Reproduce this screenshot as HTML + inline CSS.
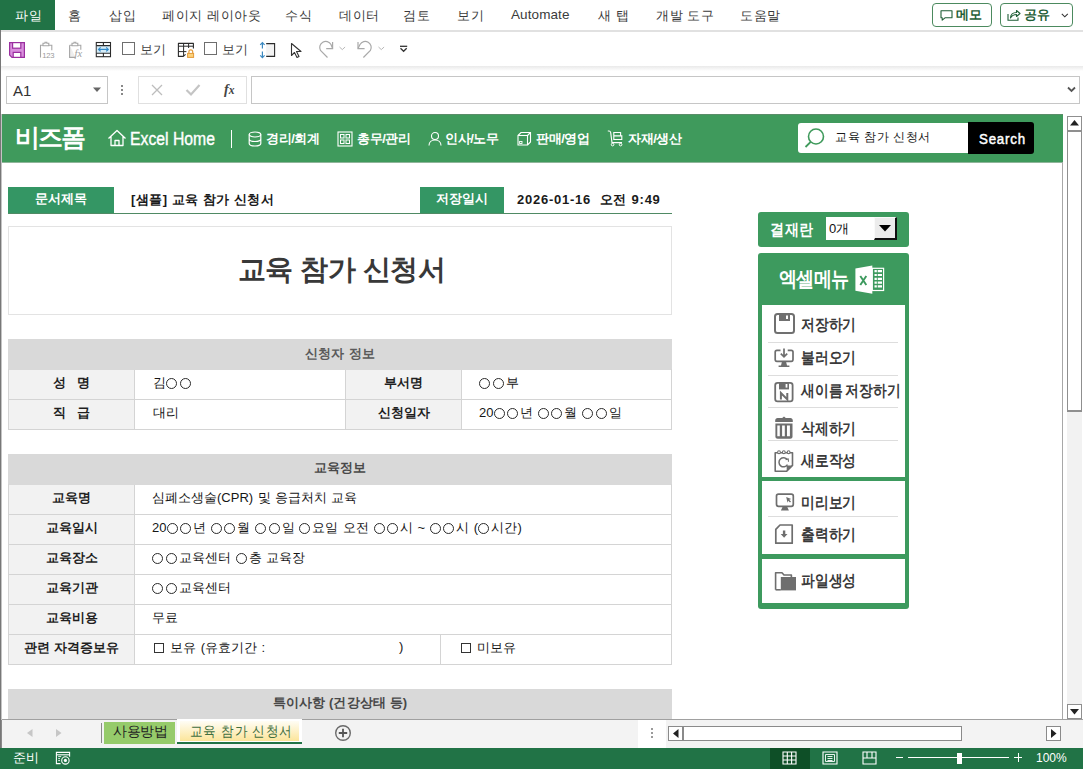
<!DOCTYPE html>
<html><head><meta charset="utf-8">
<style>
*{box-sizing:border-box;margin:0;padding:0}
html,body{width:1083px;height:769px;overflow:hidden;background:#fff;font-family:"Liberation Sans",sans-serif;color:#262626}
.a{position:absolute}
.menu span{position:absolute;top:7px;font-size:13px;color:#3b3b3b;letter-spacing:0.6px;white-space:nowrap}
.t{position:absolute;white-space:nowrap}
.cell{position:absolute;border:1px solid #d4d4d4}
.hdr{position:absolute;background:#d9d9d9;font-size:13px;font-weight:bold;color:#404040;text-align:center}
.lbl{position:absolute;background:#f2f2f2;font-size:13px;font-weight:bold;color:#262626;text-align:center}
.val{position:absolute;font-size:13px;color:#262626}
.gl{position:absolute;background:#d4d4d4}
.tl{position:absolute;text-align:center;font-size:13px;font-weight:bold;color:#1f1f1f;white-space:nowrap}
.tv{position:absolute;font-size:13px;color:#161616;white-space:nowrap;word-spacing:0.8px}
.o{display:inline-block;width:11px;height:11px;border:1px solid #2a2a2a;border-radius:50%;vertical-align:-2px;margin:0 2px 0 0.4px}
.cb{display:inline-block;width:10px;height:10px;border:1px solid #333;vertical-align:-1px;margin:0 2.5px 0 1.5px}
.mi{position:absolute;left:801px;top:0;font-size:16px;font-weight:bold;color:#3a3a3a;letter-spacing:0px;white-space:nowrap;transform:scaleX(0.86);transform-origin:0 0}
.sep{position:absolute;left:768px;width:130px;height:1px;background:#ddd}
</style></head><body>
<!-- window left border -->


<!-- MENU BAR -->
<div class="a menu" style="left:0;top:0;width:1083px;height:30px;background:#fff">
  <div class="a" style="left:0;top:0;width:55px;height:30px;background:#217346"></div>
  <span style="left:15px;color:#fff">파일</span>
  <span style="left:68px">홈</span>
  <span style="left:109px">삽입</span>
  <span style="left:162px">페이지 레이아웃</span>
  <span style="left:285px">수식</span>
  <span style="left:339px">데이터</span>
  <span style="left:403px">검토</span>
  <span style="left:457px">보기</span>
  <span style="left:511px;letter-spacing:0.1px;font-size:13.5px">Automate</span>
  <span style="left:598px">새 탭</span>
  <span style="left:656px">개발 도구</span>
  <span style="left:740px">도움말</span>
</div>
<div class="a" style="left:932px;top:3px;width:60px;height:24px;border:1px solid #4c8a5f;border-radius:4px"></div>
<svg class="a" style="left:940px;top:10px" width="13" height="11" viewBox="0 0 13 11"><path d="M1 0.8h11v7H5L2.2 10.2V7.8H1z" fill="none" stroke="#1e5e36" stroke-width="1.1" stroke-linejoin="round"/></svg>
<div class="t" style="left:956px;top:7px;font-size:12.5px;font-weight:bold;color:#1e5e36">메모</div>
<div class="a" style="left:1000px;top:3px;width:73px;height:24px;border:1px solid #4c8a5f;border-radius:4px"></div>
<svg class="a" style="left:1007px;top:9px" width="14" height="12" viewBox="0 0 14 12"><path d="M1 5v6.2h10V8.5" fill="none" stroke="#1e5e36" stroke-width="1.1"/><path d="M3.5 9c0-3.5 2.5-5.5 6-5.5V1.5l3.5 3-3.5 3V5.5c-2.5 0-4.5 1-6 3.5z" fill="none" stroke="#1e5e36" stroke-width="1.1" stroke-linejoin="round"/></svg>
<div class="t" style="left:1024px;top:7px;font-size:12.5px;font-weight:bold;color:#1e5e36">공유</div>
<svg class="a" style="left:1061px;top:13px" width="8" height="5"><path d="M0.8 0.8l3 3 3-3" fill="none" stroke="#333" stroke-width="1.1"/></svg>
<div class="a" style="left:0;top:30px;width:1083px;height:2px;background:#e1e1e1"></div>

<!-- TOOLBAR -->
<div class="a" style="left:2px;top:32px;width:1081px;height:35px;background:#fff"></div>
<div class="a" style="left:0;top:66px;width:1083px;height:5px;background:linear-gradient(#e9e9e9,#f6f6f6 60%,#fff)"></div>


<!-- toolbar icons -->
<svg class="a" style="left:0px;top:34px" width="120" height="30" viewBox="0 34 120 30">
 <path d="M9.6 42.6H24.4V57.4H12L9.6 55z" fill="#d98fdd" stroke="#9a2f9f" stroke-width="1.2"/>
 <rect x="12.6" y="42.6" width="8.2" height="5.6" fill="#fff" stroke="#9a2f9f" stroke-width="1.2"/>
 <rect x="13.2" y="52.4" width="7.6" height="5" fill="#fff" stroke="#9a2f9f" stroke-width="1.2"/>
 <path d="M40.5 57.5V45.3h2.5M48.8 45.3h3v5" fill="none" stroke="#a6a6a6" stroke-width="1.1"/>
 <path d="M43 45.8v-2.5h2v-1h1.8v1h2v2.5z" fill="none" stroke="#a6a6a6" stroke-width="1.1"/>
 <text x="42.3" y="57.6" font-size="7.6" fill="#9a9a9a" font-family="Liberation Sans" letter-spacing="-0.2">123</text>
 <path d="M69.6 45.3h2.5v0M77.8 45.3h3v4.5" fill="none" stroke="#a6a6a6" stroke-width="1.1"/>
 <path d="M69.6 45.3V57.4h6" fill="#eeeeee" stroke="#a6a6a6" stroke-width="1.1"/>
 <path d="M72 45.8v-2.5h2v-1h1.8v1h2v2.5z" fill="none" stroke="#a6a6a6" stroke-width="1.1"/>
 <text x="74.5" y="57.2" font-size="10.5" font-style="italic" fill="#a0a0a0" font-family="Liberation Serif">fx</text>
 <rect x="96.3" y="42.5" width="14.2" height="14.2" fill="#fff" stroke="#2b2b2b" stroke-width="1.1"/>
 <rect x="96.8" y="45.6" width="13.2" height="7.6" fill="#d5ecf8"/>
 <path d="M96.3 45.6h14.2M96.3 53.2h14.2M103.4 42.5v3.1M103.4 53.2v3.5" stroke="#2b2b2b" stroke-width="1.1"/>
 <path d="M98.6 49.4h9.6" stroke="#2f88c8" stroke-width="1.2"/>
 <path d="M100.6 47.4l-2 2 2 2M106.2 47.4l2 2-2 2" fill="none" stroke="#2f88c8" stroke-width="1.2"/>
</svg>
<div class="a" style="left:122px;top:42px;width:13px;height:13px;border:1px solid #6e6e6e;background:#fff"></div>
<div class="t" style="left:140px;top:41.5px;font-size:12.5px;color:#444;letter-spacing:0.1px">보기</div>
<svg class="a" style="left:172px;top:36px" width="30" height="26" viewBox="172 36 30 26">
 <path d="M193.4 48.6V43.4H178.4V56.4H183.2L185.6 54.4" fill="none" stroke="#2b2b2b" stroke-width="1.1" stroke-linejoin="round"/>
 <path d="M178.4 46.2H193.4M178.4 51.6H186.4M183.6 43.4V56.4M188.6 43.4V48" fill="none" stroke="#2b2b2b" stroke-width="1"/>
 <path d="M188.9 53.4v-1.6a1.9 1.9 0 0 1 3.8 0v1.6" fill="none" stroke="#e39a3a" stroke-width="1.2"/>
 <rect x="187.6" y="53.4" width="6" height="4" fill="#fcd27a" stroke="#e39a3a" stroke-width="1"/>
</svg>
<div class="a" style="left:204px;top:42px;width:13px;height:13px;border:1px solid #6e6e6e;background:#fff"></div>
<div class="t" style="left:222px;top:41.5px;font-size:12.5px;color:#444;letter-spacing:0.1px">보기</div>
<svg class="a" style="left:255px;top:38px" width="24" height="24" viewBox="255 38 24 24">
 <rect x="266.2" y="43.6" width="8.4" height="12.8" fill="#f3f3f3"/>
 <path d="M266.2 43.6h8.4v12.8h-8.4" fill="none" stroke="#2b2b2b" stroke-width="1.1"/>
 <path d="M262.4 42.6v6M262.4 51.4v6.2M260.2 44.8l2.2-2.2 2.2 2.2M260.2 55.4l2.2 2.2 2.2-2.2" fill="none" stroke="#3a88c0" stroke-width="1.2"/>
</svg>
<svg class="a" style="left:290px;top:42px" width="13" height="17" viewBox="0 0 13 17">
 <path d="M1.5 1.5v12l3-3 2.5 5 2-1-2.5-5h4.5z" fill="#fff" stroke="#333" stroke-width="1.1" stroke-linejoin="round"/>
</svg>
<svg class="a" style="left:310px;top:34px" width="100" height="30" viewBox="310 34 100 30">
 <path d="M327.5 57.5 L320.5 50.5 A6 6 0 1 1 331 44.5 L332.6 48.6" fill="none" stroke="#a9a9a9" stroke-width="1.2" stroke-linejoin="miter"/>
 <path d="M332.6 42v6.6h-6.4" fill="none" stroke="#a9a9a9" stroke-width="1.2"/>
 <path d="M339.5 47l2.8 2.6 2.8-2.6" fill="none" stroke="#b8b8b8" stroke-width="1"/>
 <path d="M363.4 57.5 L370.4 50.5 A6 6 0 1 0 360 44.5 L358 48.6" fill="none" stroke="#a9a9a9" stroke-width="1.2"/>
 <path d="M358 42v6.6h6.6" fill="none" stroke="#a9a9a9" stroke-width="1.2"/>
 <path d="M378.5 47l2.8 2.6 2.8-2.6" fill="none" stroke="#b8b8b8" stroke-width="1"/>
 <path d="M400 46.3h7.2" stroke="#333" stroke-width="1.3"/>
 <path d="M400.5 48.3l3.1 3 3.1-3" fill="none" stroke="#333" stroke-width="1.3"/>
</svg>
<!-- FORMULA BAR -->
<div class="a" style="left:2px;top:71px;width:1081px;height:42px;background:#fff"></div>
<div class="a" style="left:6px;top:76px;width:102px;height:28px;border:1px solid #c6c6c6;background:#fff"></div>
<div class="t" style="left:13px;top:82px;font-size:15px;color:#333">A1</div>
<div class="a" style="left:138px;top:76px;width:109px;height:28px;border:1px solid #e0e0e0;background:#fff"></div>
<div class="a" style="left:251px;top:76px;width:829px;height:28px;border:1px solid #c6c6c6;background:#fff"></div>


<svg class="a" style="left:93px;top:87px" width="9" height="6"><path d="M0 0.5h8l-4 4.5z" fill="#666"/></svg>
<div class="a" style="left:121px;top:85px;width:2px;height:2px;background:#888;box-shadow:0 4px 0 #888,0 8px 0 #888"></div>
<svg class="a" style="left:150px;top:83px" width="14" height="14"><path d="M2 2l10 10M12 2L2 12" stroke="#bdbdbd" stroke-width="1.3"/></svg>
<svg class="a" style="left:185px;top:83px" width="16" height="14"><path d="M1.5 7l4.5 4.5 8.5-9.5" fill="none" stroke="#c4c4c4" stroke-width="2.2"/></svg>
<div class="t" style="left:224px;top:82px;font-size:14px;font-style:italic;font-weight:bold;font-family:'Liberation Serif',serif;color:#444;letter-spacing:0px">f<span style="font-size:11.5px">x</span></div>
<svg class="a" style="left:1067px;top:86px" width="9" height="7"><path d="M1 1.5l3.5 3.5 3.5-3.5" fill="none" stroke="#555" stroke-width="1.8"/></svg>

<!-- SHEET AREA -->
<div class="a" style="left:2px;top:113px;width:1062px;height:607px;background:#fff"></div>
<div class="a" style="left:2px;top:114px;width:1061px;height:48px;background:#3f9a5c"></div><div class="a" style="left:2px;top:162px;width:1061px;height:1px;background:#8fb59a"></div>



<!-- DOCUMENT -->
<div class="a" style="left:8px;top:187px;width:106px;height:27px;background:#349664"></div>
<div class="t" style="left:8px;top:190px;width:106px;text-align:center;font-size:13px;font-weight:bold;color:#fff">문서제목</div>
<div class="t" style="left:131px;top:191px;font-size:13px;font-weight:bold;color:#1a1a1a;letter-spacing:0.5px">[샘플] 교육 참가 신청서</div>
<div class="a" style="left:420px;top:187px;width:84px;height:27px;background:#349664"></div>
<div class="t" style="left:420px;top:190px;width:84px;text-align:center;font-size:13px;font-weight:bold;color:#fff">저장일시</div>
<div class="t" style="left:517px;top:191px;font-size:13px;font-weight:bold;color:#1a1a1a;letter-spacing:0.75px">2026-01-16&nbsp;&nbsp;오전 9:49</div>
<div class="a" style="left:8px;top:213px;width:664px;height:1px;background:#4f8a64"></div>

<div class="a" style="left:8px;top:226px;width:664px;height:89px;border:1px solid #e3e3e3"></div>
<div class="t" style="left:8px;top:251px;width:667px;text-align:center;font-size:28px;font-weight:bold;color:#383838;letter-spacing:-0.5px">교육 참가 신청서</div>

<!-- 신청자 정보 -->
<div class="a" style="left:8px;top:339px;width:664px;height:31px;background:#d9d9d9"></div>
<div class="t" style="left:8px;top:345px;width:664px;text-align:center;font-size:13px;font-weight:bold;color:#5a5a5a;letter-spacing:0.2px">신청자 정보</div>
<div class="a" style="left:8px;top:370px;width:127px;height:60px;background:#f2f2f2"></div>
<div class="a" style="left:345px;top:370px;width:117px;height:60px;background:#f2f2f2"></div>
<div class="a grid" style="left:8px;top:369px;width:664px;height:61px;border:1px solid #d4d4d4;border-top:none"></div>
<div class="gl" style="left:8px;top:399px;width:664px;height:1px"></div>
<div class="gl" style="left:134px;top:370px;width:1px;height:60px"></div>
<div class="gl" style="left:345px;top:370px;width:1px;height:60px"></div>
<div class="gl" style="left:461px;top:370px;width:1px;height:60px"></div>
<div class="tl" style="left:8px;top:374px;width:127px">성&nbsp;&nbsp;&nbsp;명</div>
<div class="tv" style="left:153px;top:374px">김<span class="o"></span><span class="o"></span></div>
<div class="tl" style="left:345px;top:374px;width:117px">부서명</div>
<div class="tv" style="left:479px;top:374px"><span class="o"></span><span class="o"></span>부</div>
<div class="tl" style="left:8px;top:404px;width:127px">직&nbsp;&nbsp;&nbsp;급</div>
<div class="tv" style="left:153px;top:404px">대리</div>
<div class="tl" style="left:345px;top:404px;width:117px">신청일자</div>
<div class="tv" style="left:479px;top:404px">20<span class="o"></span><span class="o"></span>년 <span class="o"></span><span class="o"></span>월 <span class="o"></span><span class="o"></span>일</div>

<!-- 교육정보 -->
<div class="a" style="left:8px;top:454px;width:664px;height:31px;background:#d9d9d9"></div>
<div class="t" style="left:8px;top:459px;width:664px;text-align:center;font-size:13px;font-weight:bold;color:#484848">교육정보</div>
<div class="a" style="left:8px;top:485px;width:127px;height:179px;background:#f2f2f2"></div>
<div class="a" style="left:8px;top:484px;width:664px;height:181px;border:1px solid #d4d4d4;border-top:none"></div>
<div class="gl" style="left:8px;top:514px;width:664px;height:1px"></div>
<div class="gl" style="left:8px;top:544px;width:664px;height:1px"></div>
<div class="gl" style="left:8px;top:574px;width:664px;height:1px"></div>
<div class="gl" style="left:8px;top:604px;width:664px;height:1px"></div>
<div class="gl" style="left:8px;top:634px;width:664px;height:1px"></div>
<div class="gl" style="left:134px;top:485px;width:1px;height:180px"></div>
<div class="gl" style="left:440px;top:635px;width:1px;height:30px"></div>
<div class="tl" style="left:8px;top:489px;width:127px">교육명</div>
<div class="tv" style="left:152px;top:489px">심폐소생술(CPR) 및 응급처치 교육</div>
<div class="tl" style="left:8px;top:519px;width:127px">교육일시</div>
<div class="tv" style="left:152px;top:519px">20<span class="o"></span><span class="o"></span>년 <span class="o"></span><span class="o"></span>월 <span class="o"></span><span class="o"></span>일 <span class="o"></span>요일 오전 <span class="o"></span><span class="o"></span>시 ~ <span class="o"></span><span class="o"></span>시 (<span class="o"></span>시간)</div>
<div class="tl" style="left:8px;top:549px;width:127px">교육장소</div>
<div class="tv" style="left:152px;top:549px"><span class="o"></span><span class="o"></span>교육센터 <span class="o"></span>층 교육장</div>
<div class="tl" style="left:8px;top:579px;width:127px">교육기관</div>
<div class="tv" style="left:152px;top:579px"><span class="o"></span><span class="o"></span>교육센터</div>
<div class="tl" style="left:8px;top:609px;width:127px">교육비용</div>
<div class="tv" style="left:152px;top:609px">무료</div>
<div class="tl" style="left:8px;top:639px;width:127px">관련 자격증보유</div>
<div class="tv" style="left:152px;top:639px"><span class="cb"></span> 보유 (유효기간 :</div>
<div class="tv" style="left:399px;top:639px">)</div>
<div class="tv" style="left:459px;top:639px"><span class="cb"></span> 미보유</div>

<!-- 특이사항 -->
<div class="a" style="left:8px;top:689px;width:664px;height:31px;background:#d9d9d9"></div>
<div class="t" style="left:8px;top:694px;width:664px;text-align:center;font-size:13px;font-weight:bold;color:#484848;letter-spacing:0.1px">특이사항 (건강상태 등)</div>


<!-- RIGHT PANEL -->
<div class="a" style="left:758px;top:212px;width:151px;height:35px;background:#3d9a5e;border-radius:3px"></div>
<div class="t" style="left:770px;top:220px;font-size:16px;font-weight:bold;color:#fff;letter-spacing:0.5px;transform:scaleX(0.88);transform-origin:0 0">결재란</div>
<div class="a" style="left:826px;top:217px;width:48px;height:23px;background:#fff"></div>
<div class="t" style="left:829px;top:220px;font-size:13px;color:#111;letter-spacing:-0.5px">0개</div>
<div class="a" style="left:874px;top:217px;width:23px;height:23px;background:#ececec;border-top:1px solid #fafafa;border-left:1px solid #fafafa;border-right:2px solid #111;border-bottom:2px solid #111"></div>
<svg class="a" style="left:879px;top:225px" width="12" height="7"><path d="M0 0h12L6 6.5z" fill="#000"/></svg>

<div class="a" style="left:758px;top:253px;width:151px;height:356px;background:#3d9a5e;border-radius:3px"></div>
<div class="t" style="left:779px;top:265px;font-size:21px;font-weight:bold;color:#fff;letter-spacing:-0.8px;transform:scaleX(0.86);transform-origin:0 0">엑셀메뉴</div>
<svg class="a" style="left:850px;top:260px" width="40" height="40" viewBox="850 260 40 40">
 <path d="M855.4 268.5 L872.3 265.6 V293.7 L855.4 290.8z" fill="#fff"/>
 <path d="M860.3 276 L866.3 285 M866.3 276 L860.3 285" stroke="#3d9a5e" stroke-width="1.9"/>
 <rect x="872.3" y="268.3" width="11.3" height="22.2" fill="none" stroke="#fff" stroke-width="1.2"/>
 <path d="M874.5 271.2h7.5M874.5 275h7.5M874.5 278.8h7.5M874.5 282.6h7.5M874.5 286.4h7.5" stroke="#fff" stroke-width="2.2"/>
 <path d="M877.3 270v19" stroke="#3d9a5e" stroke-width="0.9"/>
</svg>
<div class="a" style="left:762px;top:305px;width:143px;height:172px;background:#fff"></div>
<div class="a" style="left:762px;top:481px;width:143px;height:73px;background:#fff"></div>
<div class="a" style="left:762px;top:559px;width:143px;height:44px;background:#fff"></div>
<div class="sep" style="top:342px"></div>
<div class="sep" style="top:375px"></div>
<div class="sep" style="top:407px"></div>
<div class="sep" style="top:440px"></div>
<div class="sep" style="top:516px"></div>
<div class="mi" style="top:315px">저장하기</div>
<div class="mi" style="top:348px">불러오기</div>
<div class="mi" style="top:381px;word-spacing:-1px">새이름 저장하기</div>
<div class="mi" style="top:418.5px">삭제하기</div>
<div class="mi" style="top:451px">새로작성</div>
<div class="mi" style="top:492.5px">미리보기</div>
<div class="mi" style="top:524.5px">출력하기</div>
<div class="mi" style="top:571px">파일생성</div>
<!-- menu icons -->
<svg class="a" style="left:774px;top:313px" width="21" height="21" viewBox="0 0 21 21">
 <rect x="1" y="1" width="19" height="19" rx="2.5" fill="none" stroke="#707070" stroke-width="2"/>
 <rect x="5" y="1" width="11" height="7" fill="#707070"/><rect x="12" y="2.5" width="2" height="3.5" fill="#fff"/>
</svg>
<svg class="a" style="left:770px;top:344px" width="28" height="62" viewBox="770 344 28 62">
 <path d="M780.5 350.3h-3.6c-1 0-1.7.7-1.7 1.7v7.6c0 1 .7 1.7 1.7 1.7h14.4c1 0 1.7-.7 1.7-1.7V352c0-1-.7-1.7-1.7-1.7h-3.6" fill="none" stroke="#6e6e6e" stroke-width="1.7"/>
 <path d="M784 348.6v8M780.8 353.6l3.2 3.2 3.2-3.2" fill="none" stroke="#6e6e6e" stroke-width="1.7"/>
 <path d="M782 361.5h4l1 4h2.4v1.6h-10.8v-1.6h2.4z" fill="#6e6e6e"/>
 <rect x="775.2" y="382.8" width="17.4" height="18.6" rx="2.4" fill="none" stroke="#6e6e6e" stroke-width="1.8"/>
 <path d="M779 382.8h10v6.6h-10z" fill="#6e6e6e"/>
 <path d="M785.6 384h1.8v3.6h-1.8z" fill="#fff"/>
 <path d="M780.9 399.4v-6.4l6.4 6.4v-6.4" fill="none" stroke="#6e6e6e" stroke-width="2" stroke-linejoin="miter"/>
</svg>
<svg class="a" style="left:770px;top:412px" width="28" height="64" viewBox="770 412 28 64">
 <path d="M775.2 422v-1.6c0-1.3 1-2.4 2.4-2.4h4.6l1.8-1.6 1.8 1.6h4.6c1.3 0 2.4 1 2.4 2.4V422z" fill="#6e6e6e"/>
 <path d="M775.4 423.5h17.1v12.9c0 1.3-1 2.3-2.3 2.3h-12.5c-1.3 0-2.3-1-2.3-2.3z" fill="#6e6e6e"/>
 <path d="M777.3 425.6h2.5v10.6h-2.5zM782.1 425.6h2.7v10.6h-2.7zM787 425.6h2.9v10.6H787z" fill="#fff"/>
 <path d="M775.2 452.8h17.3v12.6l-5.8 5.8h-11.5z" fill="#fff" stroke="#6e6e6e" stroke-width="1.6" stroke-linejoin="round"/>
 <path d="M786.7 471.2v-4.4c0-.8.6-1.4 1.4-1.4h4.4z" fill="#6e6e6e"/>
 <circle cx="779" cy="452.2" r="1.4" fill="#fff" stroke="#6e6e6e" stroke-width="1.1"/>
 <circle cx="783.8" cy="452.2" r="1.4" fill="#fff" stroke="#6e6e6e" stroke-width="1.1"/>
 <circle cx="788.6" cy="452.2" r="1.4" fill="#fff" stroke="#6e6e6e" stroke-width="1.1"/>
 <path d="M787.3 459.5a4.6 4.6 0 1 0 .2 5.2" fill="none" stroke="#6e6e6e" stroke-width="1.5"/>
 <path d="M785.6 459.8l2.6-.8.3 2.7" fill="none" stroke="#6e6e6e" stroke-width="1.1"/>
</svg>
<svg class="a" style="left:770px;top:488px" width="30" height="108" viewBox="770 488 30 108">
 <rect x="776.5" y="494.1" width="16.8" height="12.2" rx="2" fill="none" stroke="#6e6e6e" stroke-width="1.7"/>
 <path d="M782.5 507h4.8l1.6 3.6h-8z" fill="#6e6e6e"/>
 <path d="M786.2 497l5 2-2 .7 1.8 1.8-1 1-1.8-1.8-.7 2z" fill="#6e6e6e"/>
 <path d="M780 525h12.2v18.2h-16.4v-13.8z" fill="none" stroke="#6e6e6e" stroke-width="1.7" stroke-linejoin="round"/>
 <path d="M782.9 530.5h2.4v3.6h2.2l-3.4 3.6-3.4-3.6h2.2z" fill="#6e6e6e"/>
 <path d="M775.6 589.8v-17h6.4l2 2.2h7.4v2.4" fill="none" stroke="#6e6e6e" stroke-width="1.6" stroke-linejoin="round"/>
 <path d="M780.8 577h15.2v13.4h-15.2z" fill="#6e6e6e"/>
 <path d="M775.6 589.8h5.2" stroke="#6e6e6e" stroke-width="1.6"/>
</svg>

<!-- banner content -->
<div class="t" style="left:15px;top:121px;font-size:25px;font-weight:bold;color:#fff;letter-spacing:-2px">비즈폼</div>
<svg class="a" style="left:107px;top:129px" width="20" height="18" viewBox="0 0 20 18">
 <path d="M1.5 9.5 10 1.5l8.5 8M4 7.5v9h12v-9M8 16.5v-5h4v5" fill="none" stroke="#fff" stroke-width="1.3" stroke-linejoin="round"/>
</svg>
<div class="t" style="left:130px;top:129px;font-size:17.5px;color:#fff;-webkit-text-stroke:0.35px #fff;transform:scaleX(0.9);transform-origin:0 0">Excel Home</div>
<div class="a" style="left:231px;top:130px;width:1px;height:18px;background:#fff"></div>
<svg class="a" style="left:248px;top:131px" width="15" height="16" viewBox="0 0 15 16">
 <ellipse cx="7" cy="3.5" rx="5.8" ry="2.5" fill="none" stroke="#fff" stroke-width="1.2"/>
 <path d="M1.2 3.5v9c0 1.4 2.6 2.5 5.8 2.5s5.8-1.1 5.8-2.5v-9M1.2 8c0 1.4 2.6 2.5 5.8 2.5s5.8-1.1 5.8-2.5" fill="none" stroke="#fff" stroke-width="1.2"/>
</svg>
<div class="t" style="left:266px;top:130px;font-size:13px;font-weight:bold;color:#fff;letter-spacing:-0.4px">경리/회계</div>
<svg class="a" style="left:337px;top:131px" width="16" height="16" viewBox="0 0 16 16">
 <rect x="1" y="1" width="14" height="14" fill="none" stroke="#fff" stroke-width="1.1"/>
 <rect x="3.5" y="3.5" width="3.5" height="3.5" fill="none" stroke="#fff" stroke-width="1"/>
 <rect x="9" y="3.5" width="3.5" height="3.5" fill="none" stroke="#fff" stroke-width="1"/>
 <rect x="3.5" y="9" width="3.5" height="3.5" fill="none" stroke="#fff" stroke-width="1"/>
 <rect x="9" y="9" width="3.5" height="3.5" fill="none" stroke="#fff" stroke-width="1"/>
</svg>
<div class="t" style="left:357px;top:130px;font-size:13px;font-weight:bold;color:#fff;letter-spacing:-0.4px">총무/관리</div>
<svg class="a" style="left:428px;top:131px" width="14" height="15" viewBox="0 0 14 15">
 <circle cx="7" cy="5" r="3.5" fill="none" stroke="#fff" stroke-width="1.1"/>
 <path d="M1 14.5c0-3.5 2.7-5.5 6-5.5s6 2 6 5.5" fill="none" stroke="#fff" stroke-width="1.1"/>
</svg>
<div class="t" style="left:445px;top:130px;font-size:13px;font-weight:bold;color:#fff;letter-spacing:-0.4px">인사/노무</div>
<svg class="a" style="left:517px;top:131px" width="15" height="15" viewBox="0 0 15 15">
 <path d="M1 4.5h9.5v9.5H1zM1 4.5 4 1.5h9.5v9.5L10.5 14M10.5 4.5l3-3" fill="none" stroke="#fff" stroke-width="1.1"/>
 <rect x="2.6" y="10.5" width="2.4" height="2" fill="none" stroke="#fff" stroke-width="0.9"/>
</svg>
<div class="t" style="left:536px;top:130px;font-size:13px;font-weight:bold;color:#fff;letter-spacing:-0.4px">판매/영업</div>
<svg class="a" style="left:605px;top:128px" width="20" height="20" viewBox="605 128 20 20">
 <path d="M607.8 131h1.2c1 0 1.5.6 1.7 1.6L612 142.6h10" fill="none" stroke="#fff" stroke-width="1.1"/>
 <path d="M613.8 132.5h6.8v3.4h-6.8zM613.8 135.9h8v3.6h-8z" fill="none" stroke="#fff" stroke-width="1.1"/>
 <circle cx="612.6" cy="144.6" r="1.3" fill="none" stroke="#fff" stroke-width="1"/>
 <circle cx="620.6" cy="144.6" r="1.3" fill="none" stroke="#fff" stroke-width="1"/>
</svg>
<div class="t" style="left:628px;top:130px;font-size:13px;font-weight:bold;color:#fff;letter-spacing:-0.4px">자재/생산</div>
<div class="a" style="left:798px;top:123px;width:171px;height:30px;background:#fff;border-radius:3px 0 0 3px"></div>
<svg class="a" style="left:804px;top:127px" width="22" height="22" viewBox="0 0 22 22">
 <circle cx="12" cy="9.5" r="7.5" fill="none" stroke="#3f9a5c" stroke-width="1.6"/>
 <path d="M6.7 14.8 1.5 20" stroke="#3f9a5c" stroke-width="1.8"/>
</svg>
<div class="t" style="left:835px;top:129px;font-size:12px;color:#1a1a1a;letter-spacing:0.6px">교육 참가 신청서</div>
<div class="a" style="left:968px;top:122px;width:66px;height:32px;background:#000;border-radius:0 3px 3px 0"></div>
<div class="t" style="left:979px;top:130px;font-size:15.5px;font-weight:normal;-webkit-text-stroke:0.5px #fff;color:#fff;letter-spacing:0.9px;transform:scaleX(0.86);transform-origin:0 0">Search</div>

<!-- vertical scrollbar -->
<div class="a" style="left:1062px;top:162px;width:1px;height:558px;background:#a8a8a8"></div>
<div class="a" style="left:2px;top:114px;width:1061px;height:1px;background:#5a8d69"></div>
<div class="a" style="left:1063px;top:113px;width:20px;height:607px;background:#fff"></div>
<div class="a" style="left:1067px;top:116px;width:15px;height:15px;border:1px solid #8f8f8f;background:#fff"></div>
<svg class="a" style="left:1070px;top:120px" width="9" height="6"><path d="M0 5.5h9L4.5 0z" fill="#222"/></svg>
<div class="a" style="left:1067px;top:130px;width:15px;height:282px;border:1px solid #8f8f8f;border-top-width:2px;border-bottom-width:2px;background:#fff"></div>
<div class="a" style="left:1067px;top:412px;width:15px;height:292px;background:#f2f2f2"></div>
<div class="a" style="left:1067px;top:704px;width:15px;height:15px;border:1px solid #8f8f8f;background:#fff"></div>
<svg class="a" style="left:1070px;top:709px" width="9" height="6"><path d="M0 0h9L4.5 5.5z" fill="#222"/></svg>

<!-- SHEET TABS -->
<div class="a" style="left:0;top:719px;width:1083px;height:1px;background:#a0a0a0"></div>
<div class="a" style="left:0;top:720px;width:1083px;height:28px;background:#f3f3f3"></div>
<div class="a" style="left:0;top:719px;width:2px;height:29px;background:#8a8a8a"></div>
<svg class="a" style="left:27px;top:729px" width="6" height="8"><path d="M5.5 0v8L0 4z" fill="#c6c6c6"/></svg>
<svg class="a" style="left:56px;top:729px" width="6" height="8"><path d="M0 0v8l5.5-4z" fill="#c6c6c6"/></svg>
<div class="a" style="left:101px;top:723px;width:1px;height:20px;background:#8a8a8a"></div>
<div class="a" style="left:104px;top:722px;width:71px;height:22px;background:#96cb6b"></div>
<div class="t" style="left:113px;top:723px;font-size:14px;color:#222;letter-spacing:-0.3px">사용방법</div>
<div class="a" style="left:177px;top:719px;width:125px;height:25px;background:#fff"></div>
<div class="a" style="left:180px;top:721px;width:119px;height:20px;background:linear-gradient(#fffdf5,#fce59a)"></div>
<div class="a" style="left:177px;top:742px;width:125px;height:2px;background:#217346"></div>
<div class="t" style="left:190px;top:723px;font-size:14px;color:#3f6e3f;letter-spacing:0.9px;transform:scaleX(0.9);transform-origin:0 0">교육 참가 신청서</div>
<svg class="a" style="left:334px;top:724px" width="18" height="18" viewBox="0 0 18 18">
 <circle cx="9" cy="9" r="7.3" fill="none" stroke="#6a6a6a" stroke-width="1.4"/>
 <path d="M9 4.8v8.4M4.8 9h8.4" stroke="#555" stroke-width="1.8"/>
</svg>
<div class="a" style="left:638px;top:720px;width:28px;height:28px;background:#fff"></div>
<div class="a" style="left:651px;top:728px;width:2px;height:2px;background:#9a9a9a;box-shadow:0 4px 0 #9a9a9a,0 8px 0 #9a9a9a"></div>
<div class="a" style="left:668px;top:726px;width:15px;height:15px;border:1px solid #8a8a8a;background:#fff"></div>
<svg class="a" style="left:673px;top:729px" width="6" height="9"><path d="M5.5 0v9L0 4.5z" fill="#222"/></svg>
<div class="a" style="left:682px;top:726px;width:280px;height:15px;border:1px solid #8a8a8a;border-left-width:2px;background:#fff"></div>
<div class="a" style="left:1046px;top:726px;width:15px;height:15px;border:1px solid #8a8a8a;background:#fff"></div>
<svg class="a" style="left:1051px;top:729px" width="6" height="9"><path d="M0 0v9l5.5-4.5z" fill="#222"/></svg>

<!-- STATUS BAR -->
<div class="a" style="left:0;top:748px;width:1083px;height:21px;background:#217346"></div>
<div class="t" style="left:13px;top:750px;font-size:12.5px;color:#fff">준비</div>
<svg class="a" style="left:50px;top:748px" width="30" height="21" viewBox="50 748 30 21">
 <path d="M60.6 763.6h-4.2V752.4h13.2v4.4" fill="none" stroke="#fff" stroke-width="1.1"/>
 <path d="M56.4 754.8h13.2" stroke="#fff" stroke-width="1.1"/>
 <path d="M58.2 756.6h3M58.2 758.6h1.8M58.2 760.6h1.8" stroke="#fff" stroke-width="0.9"/>
 <circle cx="65.4" cy="760.4" r="3.7" fill="none" stroke="#fff" stroke-width="1.1"/>
 <circle cx="65.4" cy="760.4" r="1.6" fill="#fff"/>
</svg>
<div class="a" style="left:770px;top:748px;width:40px;height:21px;background:#0e4f27"></div>
<svg class="a" style="left:782px;top:751px" width="15" height="14" viewBox="0 0 15 14">
 <path d="M1 1h13v12H1zM1 5h13M1 9h13M5.3 1v12M9.6 1v12" fill="none" stroke="#fff" stroke-width="1.1"/>
</svg>
<svg class="a" style="left:822px;top:751px" width="16" height="14" viewBox="0 0 16 14">
 <path d="M1 1h14v12H1z" fill="none" stroke="#fff" stroke-width="1.1"/><path d="M3.5 3.5h9v7h-9zM5.5 5.5h5M5.5 7.5h5M5.5 9.5h5" fill="none" stroke="#fff" stroke-width="0.9"/>
</svg>
<svg class="a" style="left:862px;top:751px" width="15" height="14" viewBox="0 0 15 14">
 <path d="M1 1h13v12H1zM5 1v6h5V1M1 7h4M10 7h4" fill="none" stroke="#fff" stroke-width="1.1"/>
</svg>
<div class="a" style="left:896px;top:757px;width:7px;height:1px;background:#fff"></div>
<div class="a" style="left:908px;top:757px;width:101px;height:1px;background:#fff"></div>
<div class="a" style="left:957px;top:753px;width:5px;height:11px;background:#fff"></div>
<div class="a" style="left:1014px;top:757px;width:8px;height:1px;background:#fff"></div>
<div class="a" style="left:1017.5px;top:753px;width:1px;height:9px;background:#fff"></div>
<div class="t" style="left:1036px;top:751px;font-size:12px;color:#fff">100%</div>
<div class="a" style="left:0;top:30px;width:1px;height:718px;background:#777"></div>
<div class="a" style="left:1px;top:114px;width:1px;height:606px;background:#c4c4c4"></div>
</body></html>
